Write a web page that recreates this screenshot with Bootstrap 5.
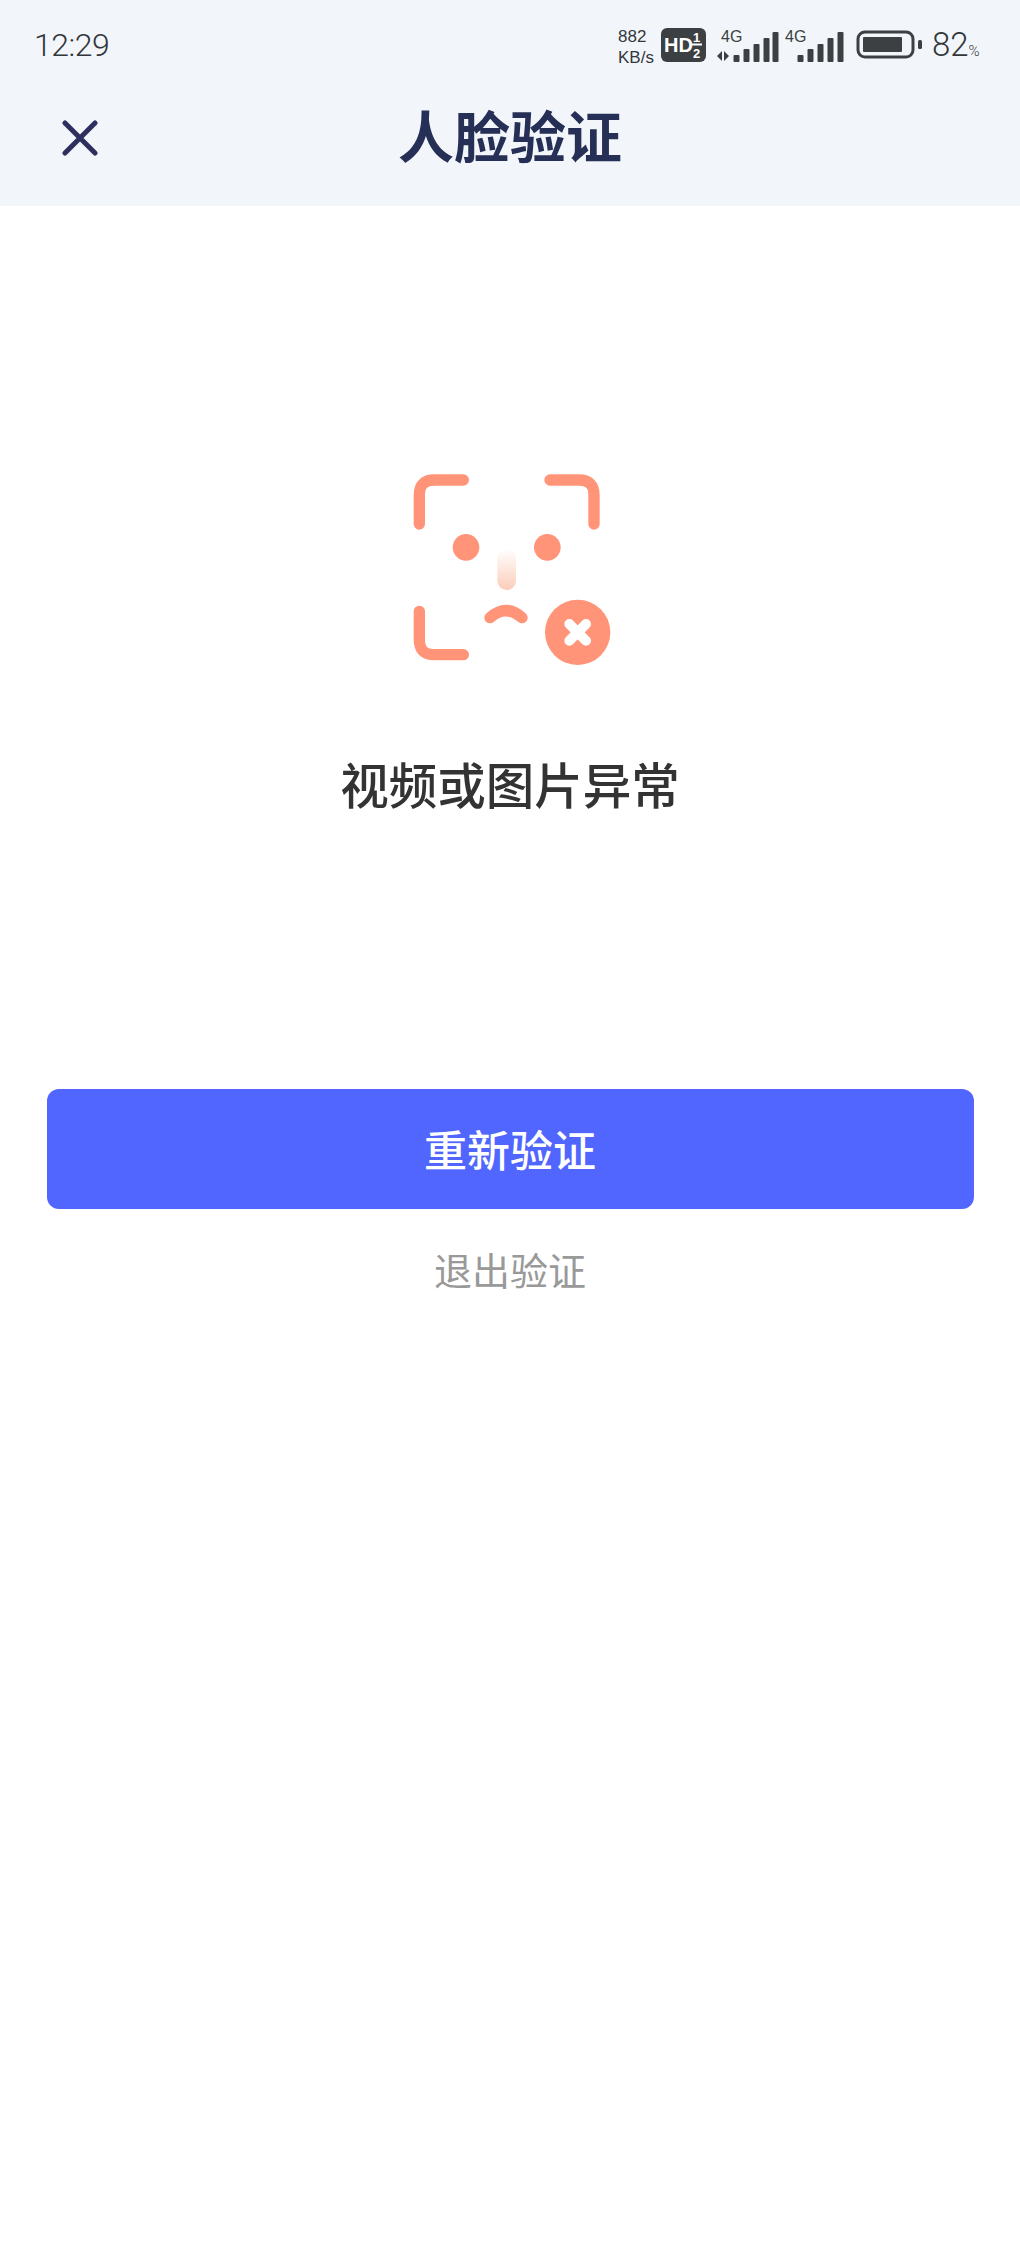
<!DOCTYPE html>
<html lang="zh-CN">
<head>
    <meta charset="UTF-8">
    <meta name="viewport" content="width=device-width, initial-scale=1.0">
    <title>人脸验证</title>
    <link href="https://cdn.jsdelivr.net/npm/bootstrap@5.3.3/dist/css/bootstrap.min.css" rel="stylesheet">
    <style>
        body {
            background-color: #fff;
            font-family: "Noto Sans CJK SC", "Noto Sans", sans-serif;
        }
        .top-area {
            background-color: #f2f6fa;
            height: 206px;
        }
        .status-row {
            height: 82px;
            padding: 28px 40px 0 34px;
            color: #33373a;
        }
        .clock {
            font-family: Roboto, sans-serif;
            font-weight: 300;
            font-size: 32px;
            line-height: 34px;
            letter-spacing: -0.5px;
        }
        .net-speed {
            font-family: "Liberation Sans", sans-serif;
            font-size: 17px;
            line-height: 21px;
            width: 43px;
            margin-top: -2px;
            white-space: nowrap;
        }
        .status-svg {
            font-family: "Liberation Sans", sans-serif;
            flex: none;
        }
        .signal-svg {
            margin-left: 9px;
        }
        .battery-svg {
            margin-left: 12px;
        }
        .battery-num {
            font-family: Roboto, sans-serif;
            font-size: 33px;
            line-height: 34px;
            font-weight: 300;
            margin-left: 10px;
            width: 48px;
            white-space: nowrap;
        }
        .battery-num span {
            font-size: 15px;
        }
        .title-row {
            display: grid;
            grid-template-columns: 1fr auto 1fr;
            height: 124px;
            padding-bottom: 13px;
        }
        .close-x {
            margin-left: 62px;
        }
        .page-title {
            font-size: 56px;
            line-height: 1;
            font-weight: 700;
            color: #262f55;
            margin: 0 0 8px;
        }
        .face-icon {
            margin-top: 244px;
        }
        .result-text {
            font-size: 48.5px;
            line-height: 70px;
            font-weight: 500;
            color: #333;
            margin-top: 58px;
        }
        .retry-btn {
            width: 927px;
            height: 120px;
            margin-top: 271px;
            padding-bottom: 8px;
            background-color: #5066ff;
            border: 0;
            border-radius: 12px;
            color: #fff;
            font-size: 43px;
            font-weight: 500;
        }
        .quit-link {
            font-size: 38px;
            line-height: 50px;
            color: #999;
            margin-top: 35px;
            text-decoration: none;
        }
    </style>
</head>
<body>
    <div class="top-area">
        <div class="status-row d-flex justify-content-between align-items-start">
            <div class="clock">12:29</div>
            <div class="d-flex align-items-start">
                <div class="net-speed">882<br>KB/s</div>
                <svg class="status-svg" width="45" height="34" viewBox="0 0 45 34">
                    <rect width="45" height="34" rx="6" fill="#3c4043"/>
                    <text x="3" y="24" font-size="20" font-weight="700" fill="#fff">HD</text>
                    <text x="32" y="14" font-size="13" font-weight="700" fill="#fff">1</text>
                    <rect x="31" y="15.5" width="10" height="2" fill="#fff"/>
                    <text x="32" y="30" font-size="13" font-weight="700" fill="#fff">2</text>
                </svg>
                <svg class="status-svg signal-svg" width="129" height="34" viewBox="0 0 129 34" fill="#3c4043">
                    <text x="6" y="14" font-size="16">4G</text>
                    <path d="M2 28l5-5v10zM9 23l5 5-5 5z"/>
                    <rect x="18.500" y="27" width="6" height="7" rx="1"/>
                    <rect x="28.500" y="21" width="6" height="13" rx="1"/>
                    <rect x="38.500" y="16" width="6" height="18" rx="1"/>
                    <rect x="48.500" y="10" width="6" height="24" rx="1"/>
                    <rect x="57.500" y="4" width="6" height="30" rx="1"/>
                    <text x="70" y="14" font-size="16">4G</text>
                    <rect x="82.500" y="27" width="6" height="7" rx="1"/>
                    <rect x="92.500" y="21" width="6" height="13" rx="1"/>
                    <rect x="102.500" y="16" width="6" height="18" rx="1"/>
                    <rect x="112.500" y="10" width="6" height="24" rx="1"/>
                    <rect x="122.500" y="4" width="6" height="30" rx="1"/>
                </svg>
                <svg class="status-svg battery-svg" width="66" height="34" viewBox="0 0 66 34" fill="#3c4043">
                    <rect x="2" y="4" width="55" height="25" rx="7" fill="none" stroke="#3c4043" stroke-width="3"/>
                    <rect x="7" y="9" width="39" height="15" rx="1"/>
                    <rect x="62" y="12" width="4" height="9" rx="1.5"/>
                </svg>
                <div class="battery-num">82<span>%</span></div>
            </div>
        </div>
        <div class="title-row align-items-center">
            <svg class="close-x" width="36" height="36" viewBox="0 0 36 36">
                <path d="M3 3L33 33M33 3L3 33" stroke="#2f2f5f" stroke-width="5" stroke-linecap="round"/>
            </svg>
            <h1 class="page-title">人脸验证</h1>
        </div>
    </div>
    <main class="d-flex flex-column align-items-center">
        <svg class="face-icon" width="240" height="240" viewBox="0 0 720 720">
            <defs>
                <linearGradient id="noseFade" x1="0" y1="0" x2="0" y2="1">
                    <stop offset="0" stop-color="#fff"/>
                    <stop offset="1" stop-color="#fbcdb9"/>
                </linearGradient>
            </defs>
            <g fill="none" stroke="#ff9478" stroke-width="34" stroke-linecap="round">
                <path d="M88 222V135Q88 90 133 90H220"/>
                <path d="M480 90H567Q612 90 612 135V222"/>
                <path d="M88 484V569Q88 614 133 614H220"/>
                <path d="M300 503Q348 461 396 503"/>
            </g>
            <circle cx="228" cy="292" r="40" fill="#ff9478"/>
            <circle cx="472" cy="292" r="40" fill="#ff9478"/>
            <rect x="322" y="296" width="56" height="124" rx="28" fill="url(#noseFade)"/>
            <circle cx="563" cy="547" r="98" fill="#ff9478"/>
            <path d="M538 522L588 572M588 522L538 572" stroke="#fff" stroke-width="30" stroke-linecap="round"/>
        </svg>
        <div class="result-text">视频或图片异常</div>
        <button type="button" class="btn retry-btn">重新验证</button>
        <a class="quit-link" href="#">退出验证</a>
    </main>
    <script src="https://cdn.jsdelivr.net/npm/bootstrap@5.3.3/dist/js/bootstrap.bundle.min.js"></script>
</body>
</html>
